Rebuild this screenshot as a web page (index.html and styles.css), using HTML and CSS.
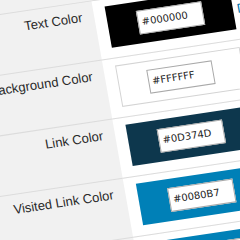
FILE: index.html
```html
<!DOCTYPE html>
<html>
<head>
<title>Colors</title>
<link rel="stylesheet" href="styles.css">
</head>
<body>
<table class="color-table">
<tr>
<th>Text Color</th>
<td><div class="swatch swatch-text"><span class="hex">#000000</span></div><a class="reset" href="#">Default</a></td>
</tr>
<tr>
<th>Background Color</th>
<td><div class="swatch swatch-bg"><span class="hex">#FFFFFF</span></div></td>
</tr>
<tr>
<th>Link Color</th>
<td><div class="swatch swatch-link"><span class="hex">#0D374D</span></div></td>
</tr>
<tr>
<th>Visited Link Color</th>
<td><div class="swatch swatch-visited"><span class="hex">#0080B7</span></div></td>
</tr>
<tr>
<th>Hover Link Color</th>
<td><div class="swatch swatch-visited"><span class="hex">#0080B7</span></div></td>
</tr>
</table>
</body>
</html>
```
FILE: styles.css
```css
body {
	margin: 0;
	background-color: #f1f1f1;
	font-family: "Liberation Sans", Arial, sans-serif;
	overflow: hidden;
}

.color-table {
	border-collapse: collapse;
	table-layout: fixed;
	width: 465px;
	margin: 23px 0 0 -60px;
	transform-origin: 0 0;
	transform: rotate(-8.5deg) skewX(1.5deg);
}

.color-table th,
.color-table td {
	border-top: 1px solid #dcdcdc;
	vertical-align: top;
}

.color-table th {
	background-color: #f1f1f1;
	color: #2a2a2a;
	font-size: 13px;
	font-weight: normal;
	line-height: 16px;
	text-align: right;
	white-space: nowrap;
	padding: 7px 12px 0 0;
	width: 141px;
}

.color-table td {
	background-color: #fff;
	padding: 7px 0 10px 12px;
	white-space: nowrap;
}

.swatch {
	box-sizing: border-box;
	display: inline-block;
	vertical-align: middle;
	width: 126px;
	height: 42px;
	padding: 9px 30px;
}

.swatch-text { background-color: #000; }
.swatch-bg { background-color: #fff; border: 1px solid #d4d4d4; padding: 8px 29px; }
.swatch-link { background-color: #0d374d; }
.swatch-visited { background-color: #0080b7; }

.hex {
	box-sizing: border-box;
	display: block;
	width: 66px;
	height: 24px;
	background-color: #fff;
	border: 1px solid #a9a9a9;
	padding: 5px 3px;
	font-family: "DejaVu Sans", Verdana, sans-serif;
	font-size: 10px;
	line-height: 12px;
	color: #222;
}

.reset {
	color: #0073aa;
	font-size: 13px;
	margin-left: 4px;
	text-decoration: none;
	vertical-align: middle;
}
```
